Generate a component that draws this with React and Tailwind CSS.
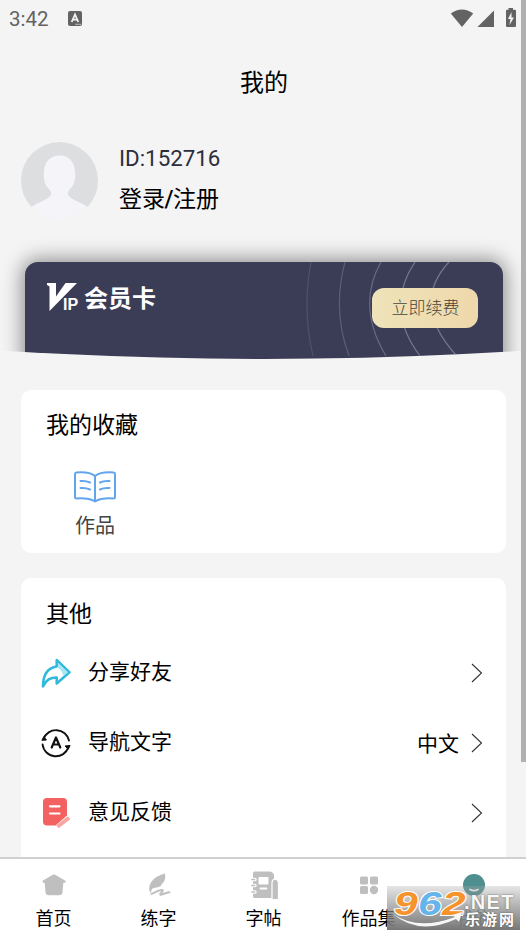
import React from 'react';

const rows = [
  { label: '分享好友', Icon: ShareIcon },
  { label: '导航文字', Icon: LanguageIcon, value: '中文' },
  { label: '意见反馈', Icon: FeedbackIcon },
];

const tabs = [
  { label: '首页', Icon: HomeIcon },
  { label: '练字', Icon: QuillIcon },
  { label: '字帖', Icon: CopybookIcon },
  { label: '作品集', Icon: GridIcon },
  { label: '我的', Icon: MineIcon, active: true },
];

function ShareIcon() {
  return (
    <svg width="30" height="30" viewBox="0 0 30 30">
      <path
        d="M15.7 2 V8.5 C6 10 2 17 2 28.5 C5.5 21.5 9 19.5 15.7 19.5 V25.5 L28.5 14.3 Z"
        fill="#fff" stroke="#2fb9dc" strokeWidth="2.5" strokeLinejoin="round"
      />
      <path d="M17 4.800 L27 14.300 L22.500 18 C21 13 19 11 17 10Z" fill="#a9e5f5" />
    </svg>
  );
}

function LanguageIcon() {
  return (
    <svg className="overflow-visible" width="30" height="30" viewBox="0 0 30 30" fill="none" stroke="#111" strokeWidth="1.900" strokeLinecap="round" strokeLinejoin="round">
      <path d="M2.500 11 A13.300 13.300 0 0 1 28 12.500" />
      <path d="M27.500 19 A13.300 13.300 0 0 1 1.600 16.500" />
      <path d="M1.300 12.300 L5.500 12 L3 9 Z" fill="#111" strokeWidth="1" />
      <path d="M28.700 17.500 L24 18 L27 21 Z" fill="#111" strokeWidth="1" />
      <path d="M10.700 19.500 L15 9.500 L19.300 19.500 M12.300 16.500 H17.700" strokeWidth="2.200" />
    </svg>
  );
}

function FeedbackIcon() {
  return (
    <svg width="30" height="32" viewBox="0 0 30 32">
      <path d="M6 1 H22 Q26 1 26 5 V18.500 L14.500 28.500 H6 Q2 28.500 2 24.500 V5 Q2 1 6 1Z" fill="#f36260" />
      <path d="M9 9.300 H18.500 M9 16.500 H18.500" stroke="#fff" strokeWidth="2.200" strokeLinecap="round" />
      <path d="M18 28.500 L26.500 22" stroke="#fba5a3" strokeWidth="4" strokeLinecap="square" />
    </svg>
  );
}

function BookIcon() {
  return (
    <svg width="44" height="34" viewBox="0 0 44 34" fill="none" stroke="#62a5ee" strokeWidth="2" strokeLinecap="round" strokeLinejoin="round">
      <path d="M22 6 C17 2 10 2 3.500 2.500 Q2 2.700 2 4 V27 Q2 28.500 3.500 28.500 C11 28 17 28.500 22 31.500 C27 28.500 33 28 40.500 28.500 Q42 28.500 42 27 V4 Q42 2.700 40.500 2.500 C34 2 27 2 22 6 V31.500" />
      <path d="M7.500 11 Q13 10.500 17 12.500 M7.500 18 Q13 17.500 17 19.500 M36.500 11 Q31 10.500 27 12.500 M36.500 18 Q31 17.500 27 19.500" />
    </svg>
  );
}

function HomeIcon() {
  return (
    <svg width="24" height="24" viewBox="0 0 24 24" fill="#bfbfbf">
      <path d="M12 1.500 Q13 1.500 14 2.300 L23 7.500 Q24.200 8.700 23 9.700 H21.300 L20.500 19.500 Q20 22.300 17 22.300 H7 Q4 22.300 3.500 19.500 L2.700 9.700 H1 Q-.2 8.700 1 7.500 L10 2.300 Q11 1.500 12 1.500Z" />
    </svg>
  );
}

function QuillIcon() {
  return (
    <svg width="24" height="26" viewBox="0 0 24 26">
      <path d="M18 1.500 C19 7 17 11 14 12.500 L15 13 C11 16 7 15.500 5.500 16.500 C4.500 17.500 4 19 4 21 C1 18 2 13 5 9 C8 5 13 3 18 1.500Z" fill="#bfbfbf" />
      <path d="M4.500 21.800 C8 20.500 13 17.500 15.500 18 C17 19 12 22 13.500 22.700 C15 23.200 19 20 22.500 20.200" fill="none" stroke="#bfbfbf" strokeWidth="2" strokeLinecap="round" />
    </svg>
  );
}

function CopybookIcon() {
  return (
    <svg width="28" height="28" viewBox="0 0 28 28">
      <path d="M5 0.500 H19 Q24 0.500 24 5 V27 H4.500 Q3 27 3 25 V2.500 Q3 0.500 5 0.500Z" fill="#bfbfbf" />
      <rect x="8.500" y="6" width="10" height="7.500" rx="1" fill="#fff" />
      <path d="M10.500 17.500 H16.500" stroke="#fff" strokeWidth="1.800" strokeLinecap="round" />
      <path d="M3.500 8.500 H5 M3.500 14.500 H5 M3.500 21 H5" stroke="#fff" strokeWidth="3.400" strokeLinecap="round" />
      <path d="M2 8.500 H4.500 M2 14.500 H4.500 M2 21 H4.500" stroke="#bfbfbf" strokeWidth="1.700" strokeLinecap="round" />
      <path d="M22 28.500 V11.500 Q22 8.500 25 8 Q28.500 9 28.500 11.500 V28.500Z" fill="#bfbfbf" stroke="#fff" strokeWidth="1.200" />
    </svg>
  );
}

function GridIcon() {
  return (
    <svg width="20" height="20" viewBox="0 0 20 20" fill="#bfbfbf">
      <rect x="1" y="1.500" width="8" height="8" rx="1.500" />
      <rect x="11" y="1.500" width="8" height="8" rx="1.500" />
      <rect x="1" y="11" width="8" height="8" rx="1.500" />
      <circle cx="15" cy="15" r="4.200" />
    </svg>
  );
}

function MineIcon() {
  return (
    <svg width="24" height="24" viewBox="0 0 24 24">
      <circle cx="12" cy="12" r="11" fill="#4f8f90" />
      <path d="M8 16.500 Q12 18.800 16 16.500" fill="none" stroke="#fff" strokeWidth="1.700" strokeLinecap="round" />
    </svg>
  );
}

function Chevron() {
  return (
    <svg width="12" height="20" viewBox="0 0 12 20" fill="none" stroke="#333" strokeWidth="1.100">
      <path d="M1 1 L10.500 10 L1 19" />
    </svg>
  );
}

function StatusBar() {
  return (
    <div className="flex h-9 items-center pl-[9px] pr-[10px] text-[#636363]">
      <span className="w-[39px] pt-px font-['Roboto',sans-serif] text-[20.500px] leading-9">3:42</span>
      <div className="ml-5 flex h-[15px] w-[14px] items-center justify-center rounded-[2px] bg-[#636363]">
        <svg width="14" height="15" viewBox="0 0 14 15" fill="none" stroke="#f4f4f4" strokeWidth="1.800">
          <path d="M3.700 11 L7 3.500 L10.300 11 M5 8.700 H9" />
          <path d="M7.500 13.300 H13" strokeWidth="1" strokeDasharray="1.200 .8" />
        </svg>
      </div>
      <svg className="ml-auto" width="66" height="22" viewBox="0 0 66 22" fill="#636363">
        <path d="M0.800 6.500 Q12 -1.500 23.200 6.500 L12 20Z" />
        <path d="M44 3.500 V20 H27.500Z" />
        <path d="M58.500 1 H63 V2.800 H65 Q66 2.800 66 3.800 V19 Q66 20 65 20 H57 Q56 20 56 19 V3.800 Q56 2.800 57 2.800 H58.500Z" />
        <path d="M61.500 5 L58 12 H60.500 L59.500 18 L64 10.500 H61.500Z" fill="#f4f4f4" />
      </svg>
    </div>
  );
}

function VipCard() {
  return (
    <div className="h-[124px] w-[521px] pl-[25px] pt-[27px] [clip-path:circle(4064px_at_264px_-3940px)]">
      <div className="relative flex h-[110px] w-[478px] items-start rounded-t-[13px] bg-[#3b3d57] shadow-[0_0_19px_3px_rgba(0,0,0,0.42)]">
        <svg className="absolute right-0 top-0" width="220" height="97" viewBox="0 0 220 97" fill="none" stroke="#8e90a5" strokeWidth="1.200">
          <path d="M28 0 Q19 48 30 94" opacity=".25" />
          <path d="M62 0 Q49 48 66 94" opacity=".4" />
          <path d="M98 0 Q73 44 103 94" opacity=".55" />
          <path d="M132 0 Q101 46 137 94" opacity=".7" />
          <path d="M166 0 Q127 42 173 93" opacity=".7" />
        </svg>
        <div className="ml-[21px] mt-[20px] flex items-start text-white">
          <svg width="32" height="30" viewBox="0 0 32 30" fill="#fff">
            <path d="M1 1 H10 V14.500 L19.500 1 H31 L3.500 29 V4.500 L1 3Z" />
          </svg>
          <span className="-ml-[15px] mt-[15px] w-[15px] font-['Liberation_Sans',sans-serif] text-[16px] font-bold leading-4">IP</span>
          <span className="ml-[6px] mt-px font-['Noto_Sans_CJK_SC',sans-serif] text-[24px] font-bold leading-[28px]">会员卡</span>
        </div>
        <button className="relative ml-auto mr-[25px] mt-[26px] h-10 w-[106px] rounded-[12px] bg-gradient-to-r from-[#eee3b9] to-[#efd8ab] pl-px pt-px text-[17px] font-light leading-[39px] text-[#4a4435]">
          立即续费
        </button>
      </div>
    </div>
  );
}

function Watermark() {
  return (
    <div className="absolute bottom-[6px] left-[387px] h-11 w-[133px] bg-gradient-to-b from-[#aaaaaa]/30 to-[#777777]">
      <div className="absolute left-[7px] top-0 flex font-['Liberation_Sans',sans-serif] text-[34px] font-bold italic leading-[34px] [-webkit-text-stroke:2px_#fff] [paint-order:stroke_fill]">
        <span className="inline-block w-[24px] origin-left scale-x-[1.250] text-[#f6932c]">9</span>
        <span className="inline-block w-[24px] origin-left scale-x-[1.250] text-[#65b5ea]">6</span>
        <span className="inline-block w-[24px] origin-left scale-x-[1.250] text-[#f6932c]">2</span>
      </div>
      <svg className="absolute left-[6px] top-[26px]" width="70" height="17" viewBox="0 0 70 17">
        <path d="M0 2 Q25 19 62 5 L59 3 L69 0 L66 10 L63 7 Q26 24 0 2Z" fill="#f7f7f7" />
      </svg>
      <span className="absolute left-[77px] top-[6px] font-['Liberation_Sans',sans-serif] text-[20px] font-bold leading-[20px] tracking-[1.300px] text-[#f8f8f8] [text-shadow:0_0_2px_#555]">.NET</span>
      <span className="absolute left-[78px] top-[26px] whitespace-nowrap text-[15px] font-bold leading-[16px] tracking-[2px] text-white [text-shadow:0_0_2px_#555]">乐游网</span>
    </div>
  );
}

export default function App() {
  return (
    <div className="relative flex h-[936px] w-[526px] flex-col overflow-hidden bg-[#f4f4f4] font-['Roboto','Noto_Sans_CJK_SC',sans-serif] text-black">
      <StatusBar />
      <h1 className="mt-[29px] pl-[2px] pt-px text-center text-[24px] leading-[35px]">我的</h1>

      <div className="mt-[35px] flex h-[99px] items-start pl-[21px]">
        <svg className="mt-[6px]" width="77" height="77" viewBox="0 0 77 77">
          <circle cx="38.500" cy="38.500" r="38.500" fill="#f4f4f9" />
          <path d="M10.500 65 A38.500 38.500 0 1 1 66.500 65 C60 60 51 58 48 54 Q45 51 49 47 C54 42 54.500 37 54 29 C53.500 19 47 13.500 38.500 13.500 C30 13.500 23.500 19 23 29 C22.500 37 23 42 28 47 Q32 51 29 54 C26 58 17 60 10.500 65Z" fill="#dcdedf" />
        </svg>
        <div className="ml-[21px]">
          <div className="mt-[6px] text-[22.300px] leading-8 text-[#2b2d3b]">ID:152716</div>
          <div className="mt-[10px] text-[23px] leading-8">
            登录<span className="-mx-[0.500px] font-medium">/</span>注册
          </div>
        </div>
      </div>

      <VipCard />

      <section className="ml-[21px] mt-[31px] h-[163px] w-[485px] shrink-0 rounded-[10px] bg-white pl-[25px] pt-[20px]">
        <h2 className="text-[23px] leading-8">我的收藏</h2>
        <div className="ml-[18px] mt-[28px] flex w-[62px] flex-col items-center">
          <BookIcon />
          <span className="mt-[8px] text-[20px] leading-7 text-[#444]">作品</span>
        </div>
      </section>

      <section className="ml-[21px] mt-[25px] min-h-0 w-[485px] flex-1 overflow-hidden rounded-t-[10px] bg-white pt-[21px]">
        <h2 className="pl-[25px] text-[23px] leading-8">其他</h2>
        <div className="mt-[7px]">
          {rows.map(({ label, value, Icon }) => (
            <div key={label} className="flex h-[70px] items-center pl-5 pr-[23px]">
              <Icon />
              <span className="-mt-[3px] ml-[17px] text-[21px] leading-8">{label}</span>
              <span className="ml-auto mr-[12px] mt-px text-[21px] leading-8">{value}</span>
              <Chevron />
            </div>
          ))}
        </div>
      </section>

      <nav className="flex h-[79px] shrink-0 border-t-2 border-[#d0d0d0] bg-white pl-px">
        {tabs.map(({ label, Icon, active }) => (
          <div key={label} className="flex flex-1 flex-col items-center">
            <div className="flex h-[52px] items-center">
              <Icon />
            </div>
            <span className={`text-[18px] leading-[16px] ${active ? 'text-[#4f8f90]' : ''}`}>{label}</span>
          </div>
        ))}
      </nav>

      <Watermark />
      <div className="absolute right-0 top-0 h-[762px] w-[5px] bg-[#b0b0b0]" />
    </div>
  );
}
